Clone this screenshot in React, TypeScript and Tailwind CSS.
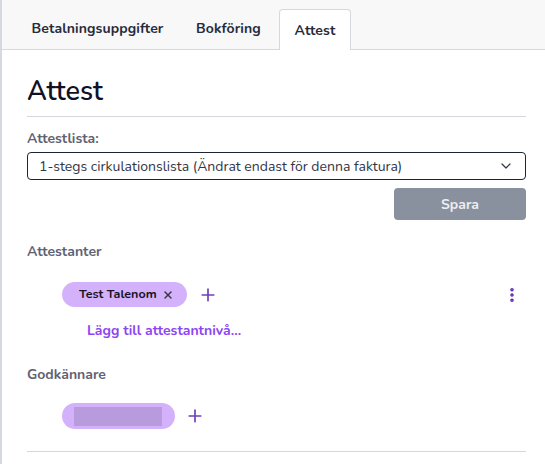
import { ChevronDown, Plus, X, MoreVertical } from "lucide-react";

const tabs = [
  { label: "Betalningsuppgifter", w: "w-[161px]", active: false },
  { label: "Bokföring", w: "w-[95px]", active: false },
  { label: "Attest", w: "w-[72px]", active: true },
];

export default function App() {
  return (
    <div
      className="min-h-[464px] w-[545px] border-l-2 border-[#d5d8dd] bg-white text-[#262a3b]"
      style={{ fontFamily: "Nunito, Lato, 'Open Sans', sans-serif" }}
    >
      {/* tab bar */}
      <div className="flex h-[50px] items-end gap-[3px] border-b border-[#d5d8dd] bg-[#f8f8f8] pl-[15px]">
        {tabs.map((t) => (
          <div
            key={t.label}
            className={`${t.w} flex h-[41px] items-center justify-center text-[14px] font-bold tracking-[0.1px] ${
              t.active
                ? "-mb-px h-[41px] rounded-t-[4px] border border-b-0 border-[#d5d8dd] bg-white"
                : ""
            }`}
          >
            {t.label}
          </div>
        ))}
      </div>

      <div className="pl-[25px] pr-[19px]">
        <h1 className="pt-[26px] text-[27px] font-semibold leading-[32px] text-[#0f1226]">
          Attest
        </h1>
        <div className="mt-[8px] border-t border-[#d5d8dd]" />

        <div className="mt-[12px] text-[14px] font-bold leading-[20px] text-[#5f6273]">
          Attestlista:
        </div>
        <div className="mt-[3px] flex h-[28px] items-center justify-between rounded-[4px] border border-[#1f2433] pl-[11px] pr-[11px] text-[14px] text-[#333645]">
          <span>1-stegs cirkulationslista (Ändrat endast för denna faktura)</span>
          <ChevronDown className="h-[16px] w-[16px] text-[#333645]" strokeWidth={1.8} />
        </div>
        <div className="mt-[8px] flex justify-end">
          <button className="flex h-[32px] w-[132px] items-center justify-center rounded-[4px] bg-[#8a919e] text-[14px] font-bold text-[#eceef2]">
            Spara
          </button>
        </div>

        <div className="mt-[22px] text-[14px] font-bold leading-[20px] text-[#5f6273]">
          Attestanter
        </div>
        <div className="mt-[20px] flex items-center pl-[35px]">
          <div className="flex h-[25px] w-[125px] items-center justify-between rounded-full bg-[#d4b2fb] pl-[17px] pr-[13px] text-[12.5px] font-bold text-[#1a1326]">
            <span>Test Talenom</span>
            <X className="h-[12px] w-[12px] text-[#3b3447]" strokeWidth={2.8} />
          </div>
          <Plus className="ml-[11px] h-[20px] w-[20px] text-[#6c40b8]" strokeWidth={2} />
          <MoreVertical className="ml-auto mr-[5px] h-[18px] w-[18px] text-[#5d30b3]" strokeWidth={2.8} />
        </div>
        <div className="mt-[14px] pl-[60px] text-[14px] font-bold leading-[20px] text-[#8c45f3]">
          Lägg till attestantnivå...
        </div>

        <div className="mt-[24px] text-[14px] font-bold leading-[20px] text-[#5f6273]">
          Godkännare
        </div>
        <div className="mt-[18px] flex items-center pl-[35px]">
          <div className="flex h-[26px] w-[113px] items-center rounded-full bg-[#d4b2fb] pl-[12px]">
            <div className="h-[19px] w-[88px] bg-[#b89bdc]" />
          </div>
          <Plus className="ml-[10px] h-[20px] w-[20px] text-[#6c40b8]" strokeWidth={2} />
        </div>
        <div className="mt-[22px] border-t border-[#d5d8dd]" />
      </div>
    </div>
  );
}
